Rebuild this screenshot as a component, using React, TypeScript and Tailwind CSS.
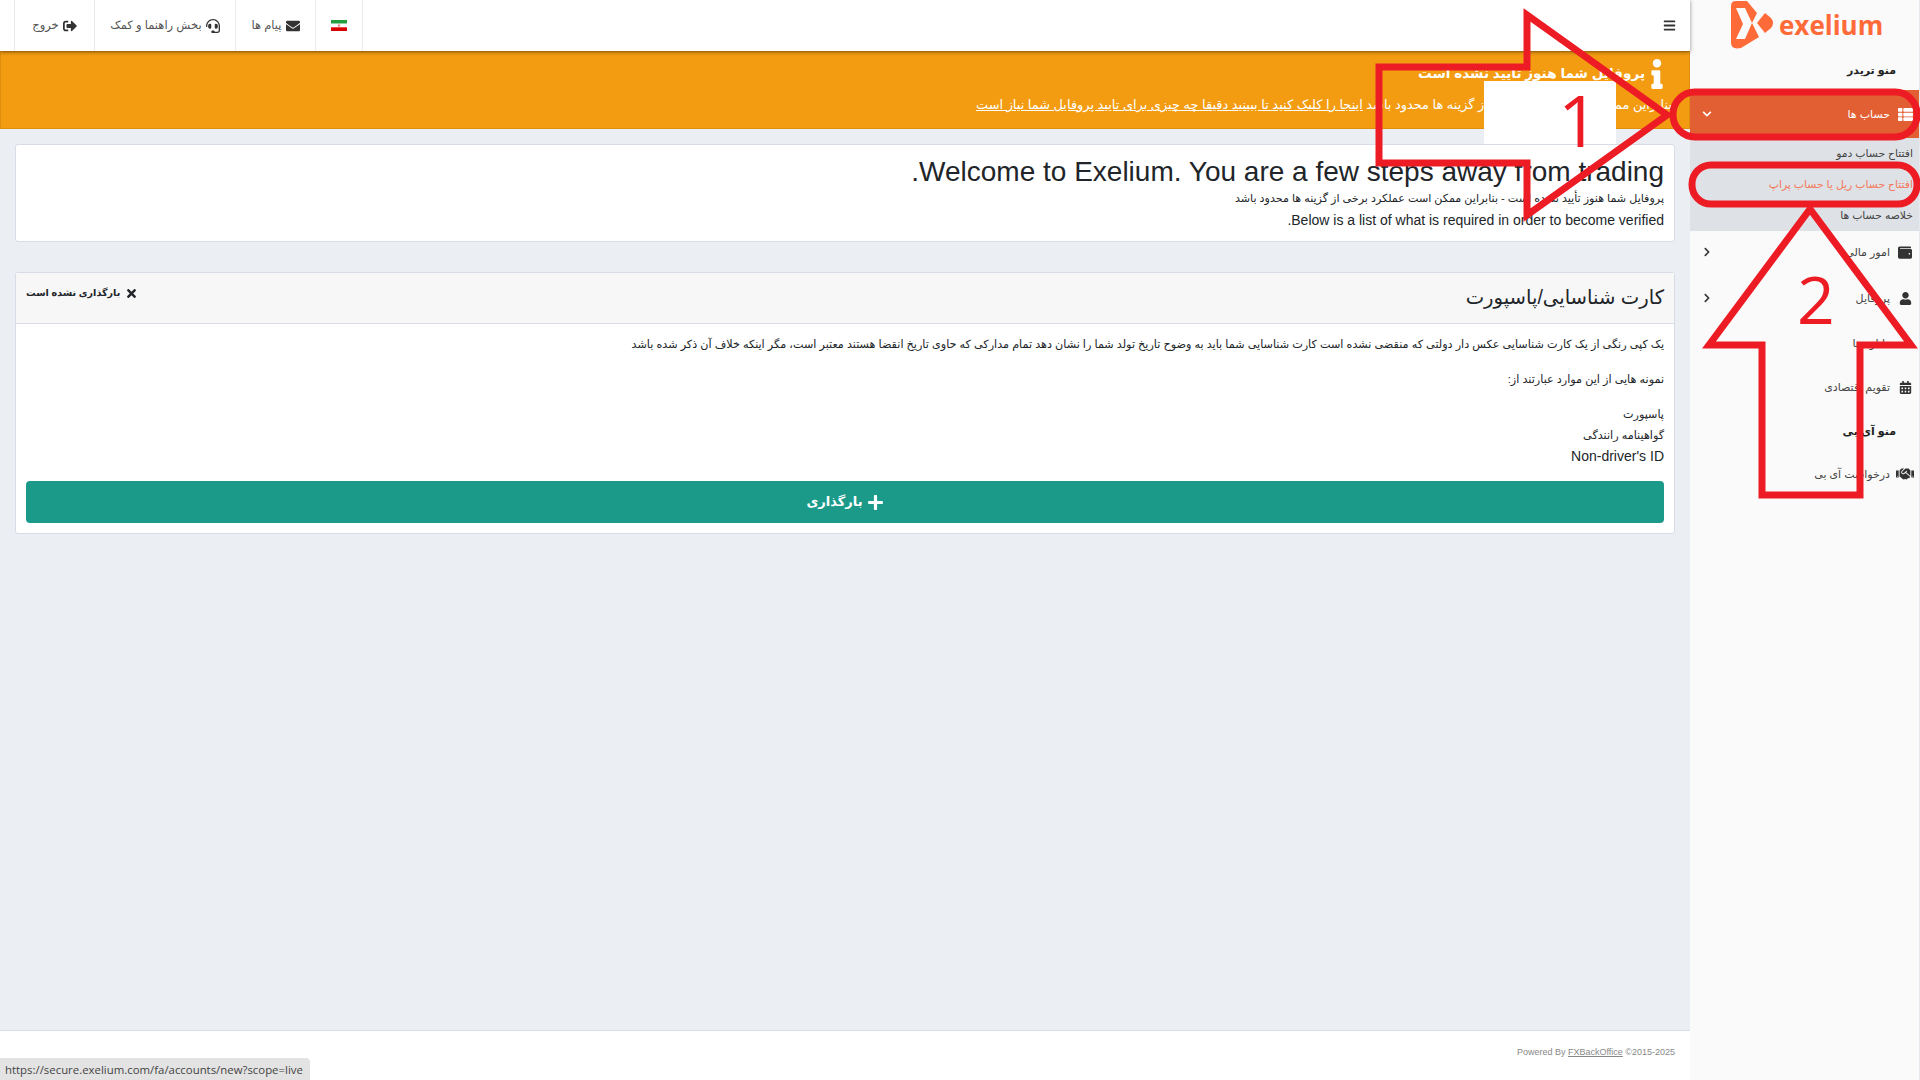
import type { ReactNode } from "react";
import {
  FaBars,
  FaCalendarAlt,
  FaChevronDown,
  FaChevronRight,
  FaEnvelope,
  FaHandshake,
  FaHeadset,
  FaInfo,
  FaPlus,
  FaSignOutAlt,
  FaThList,
  FaTimes,
  FaUser,
  FaWallet,
} from "react-icons/fa";

const font = "font-['Liberation_Sans','DejaVu_Sans',sans-serif]";

function Flag() {
  return (
    <svg width="16" height="11" viewBox="0 0 16 11">
      <rect width="16" height="3.7" fill="#239f40" />
      <rect y="3.7" width="16" height="3.6" fill="#ffffff" />
      <rect y="7.3" width="16" height="3.7" fill="#da0000" />
      <circle cx="8" cy="5.5" r="1.3" fill="#e88" />
    </svg>
  );
}

function Logo() {
  return (
    <svg width="46" height="50" viewBox="0 0 46 50">
      <path
        d="M2 6 Q2 1 7 1 L18 1 L28 13 L23 23 L30 37 L12 48 Q2 50 2 43 Z M7 8 L16 8 L23 23 L16 39 L7 39 L14 24 Z"
        fill="#ff6a39"
        fillRule="evenodd"
      />
      <path d="M28 23 L36 13 L42 18 Q46 23 42 28 L36 33 Z" fill="#ff6a39" />
    </svg>
  );
}

function TopItem({ icon, label, className }: { icon: ReactNode; label?: string; className: string }) {
  return (
    <div className={`h-full flex items-center justify-center gap-1 border-l border-[#e9ecef] text-[11.5px] text-[#555] ${className}`}>
      {icon}
      {label && <span>{label}</span>}
    </div>
  );
}

function MenuRow({
  icon,
  label,
  arrow,
  className,
}: {
  icon?: ReactNode;
  label: string;
  arrow?: boolean;
  className: string;
}) {
  return (
    <div className={`flex items-center pr-[7px] pl-[12px] text-[11px] text-[#444] ${className}`}>
      <span className="w-[14px] flex justify-center text-[13px] text-[#333]">{icon}</span>
      <span className="mr-2">{label}</span>
      {arrow && <FaChevronRight className="mr-auto text-[10px] text-[#333]" />}
    </div>
  );
}

function Annotations() {
  return (
    <div className="absolute inset-0 pointer-events-none">
      <div className="absolute left-[1484px] top-[81px] w-[132px] h-[63px] bg-white" />
      <svg className="absolute inset-0" width="1920" height="1080" fill="none" stroke="#ed1c24" strokeWidth="7">
        <polygon points="1379,67 1527,67 1527,15 1667,115 1527,215 1527,163 1379,163" strokeWidth="7" />
        <rect x="1673" y="92" width="244" height="45" rx="22" />
        <rect x="1692" y="165" width="225" height="39" rx="19" />
        <polygon points="1810,209 1911,345 1860,345 1860,495 1762,495 1762,345 1709,345" />
      </svg>
      <span className="absolute left-[1558px] top-[70px] text-[72px] leading-[98px] text-[#ed1c24] font-['Open_Sans',sans-serif]">
        1
      </span>
      <span className="absolute left-[1797px] top-[253px] text-[66px] leading-[90px] text-[#ed1c24] font-['Open_Sans',sans-serif]">
        2
      </span>
    </div>
  );
}

export default function App() {
  return (
    <div dir="rtl" className={`relative h-screen w-[1920px] overflow-hidden flex bg-[#ebeef3] text-[#212529] ${font}`}>
      <aside className="w-[230px] shrink-0 bg-[#fafafa] flex flex-col border-r border-[#e6e9ee]">
        <div dir="ltr" className="h-[50px] shrink-0 flex items-center gap-[4px] pl-[39px]">
          <Logo />
          <span className="text-[26px] leading-none font-bold text-[#ff6a39] font-['Open_Sans',sans-serif]">exelium</span>
        </div>
        <div className="h-[40px] shrink-0 flex items-center pr-[23px] text-[11px] font-bold text-[#222]">منو تریدر</div>
        <div className="h-[48px] shrink-0 bg-[#e25e33] flex items-center pr-[6px] pl-[12px] text-[11px] text-white">
          <FaThList className="text-[15px]" />
          <span className="mr-2">حساب ها</span>
          <FaChevronDown className="mr-auto text-[10px]" />
        </div>
        <div className="h-[93px] shrink-0 bg-[#dee1e6] flex flex-col text-[10.8px] pr-[6px]">
          <div className="h-[31px] flex items-center text-[#444]">افتتاح حساب دمو</div>
          <div className="h-[31px] flex items-center text-[#f4785a]">افتتاح حساب ریل یا حساب پراپ</div>
          <div className="h-[31px] flex items-center text-[#444]">خلاصه حساب ها</div>
        </div>
        <MenuRow icon={<FaWallet className="text-[15px]" />} label="امور مالی" arrow className="h-[42px]" />
        <MenuRow icon={<FaUser />} label="پروفایل" arrow className="h-[50px]" />
        <MenuRow label="دانلود ها" className="h-[40px]" />
        <MenuRow icon={<FaCalendarAlt />} label="تقویم اقتصادی" className="h-[49px]" />
        <div className="h-[38px] flex items-center pr-[23px] text-[11px] font-bold text-[#222]">منو آی بی</div>
        <MenuRow icon={<FaHandshake className="text-[18px] shrink-0" />} label="درخواست آی بی" className="h-[48px]" />
      </aside>

      <div className="flex-1 min-w-0 flex flex-col">
        <header className="relative h-[51px] shrink-0 bg-white flex items-center justify-between shadow-[0_1px_4px_rgba(0,0,0,0.45)] z-10">
          <FaBars className="mr-[14px] text-[13px] text-[#333]" />
          <nav className="h-full flex ml-[14px] border-r border-[#e9ecef]">
            <TopItem className="w-[47px]" icon={<Flag />} />
            <TopItem className="w-[80px]" icon={<FaEnvelope className="text-[14px] text-[#333]" />} label="پیام ها" />
            <TopItem className="w-[141px]" icon={<FaHeadset className="text-[14px] text-[#333]" />} label="بخش راهنما و کمک" />
            <TopItem className="w-[80px]" icon={<FaSignOutAlt className="text-[14px] text-[#333]" />} label="خروج" />
          </nav>
        </header>

        <section className="h-[78px] shrink-0 bg-[#f39c12] border border-[#e08e0b] text-white pr-[17px] pt-[5px]">
          <div className="flex items-center h-[34px]">
            <FaInfo className="text-[30px] ml-[-3px]" />
            <h4 className="text-[13.6px] font-bold">پروفایل شما هنوز تایید نشده است</h4>
          </div>
          <p className="text-[12.9px] mt-[4px] leading-[20px]">
            بنابراین ممکن است عملکرد برخی از گزینه ها محدود باشد{" "}
            <a className="underline">اینجا را کلیک کنید تا ببینید دقیقا چه چیزی برای تایید پروفایل شما نیاز است</a>
          </p>
        </section>

        <main className="flex-1 min-h-0 px-[15px] pt-[15px]">
          <div className="h-[98px] bg-white border border-[#d8dce6] rounded-[3px] px-[10px] pt-[10px]">
            <h1 className="text-[28px] leading-[34px]">Welcome to Exelium. You are a few steps away from trading.</h1>
            <p className="text-[11.1px] leading-[18px]">
              پروفایل شما هنوز تأیید نشده است - بنابراین ممکن است عملکرد برخی از گزینه ها محدود باشد
            </p>
            <p className="text-[14px] leading-[20px] mt-[3px]">Below is a list of what is required in order to become verified.</p>
          </div>

          <div className="mt-[30px] h-[262px] bg-white border border-[#d8dce6] rounded-[3px]">
            <div className="h-[51px] bg-[#f7f7f7] border-b border-[#d8dce6] flex justify-between px-[10px]">
              <h3 className="text-[19.6px] leading-[24px] mt-[12px]">کارت شناسایی/پاسپورت</h3>
              <div className="flex items-center gap-[5px] h-[16px] mt-[12px] text-[9.6px] font-bold">
                <FaTimes className="text-[13px]" />
                <span>بارگذاری نشده است</span>
              </div>
            </div>
            <div className="px-[10px] pt-[12px] text-[11.2px]">
              <p className="leading-[16px]">
                یک کپی رنگی از یک کارت شناسایی عکس دار دولتی که منقضی نشده است کارت شناسایی شما باید به وضوح تاریخ تولد شما را نشان دهد تمام مدارکی که حاوی تاریخ انقضا هستند معتبر است، مگر اینکه خلاف آن ذکر شده باشد
              </p>
              <p className="leading-[16px] mt-[19px]">نمونه هایی از این موارد عبارتند از:</p>
              <p className="leading-[21px] mt-[17px]">پاسپورت</p>
              <p className="leading-[21px]">گواهینامه رانندگی</p>
              <p dir="ltr" className="text-right text-[14px] leading-[21px]">Non-driver's ID</p>
              <button className="mt-[14px] w-full h-[42px] bg-[#1b9a8a] rounded-[4px] flex items-center justify-center gap-[4px] text-white text-[13px] font-bold">
                <FaPlus className="text-[17px]" />
                <span>بارگذاری</span>
              </button>
            </div>
          </div>
        </main>

        <footer dir="ltr" className="h-[50px] shrink-0 bg-white border-t border-[#d8dce6] flex justify-end pr-[15px] pt-[15px] text-[9px] leading-[12px] text-[#888]">
          <span>
            Powered By <a className="underline">FXBackOffice</a> ©2015-2025
          </span>
        </footer>
      </div>

      <div dir="ltr" className="absolute left-0 bottom-0 w-[310px] h-[22px] bg-[#e3e3e3] rounded-tr-[4px] pl-[5px] text-[11.4px] leading-[23px] whitespace-nowrap text-[#444] font-['Open_Sans',sans-serif] z-20">
        https://secure.exelium.com/fa/accounts/new?scope=live
      </div>

      <div className="z-30">
        <Annotations />
      </div>
    </div>
  );
}
